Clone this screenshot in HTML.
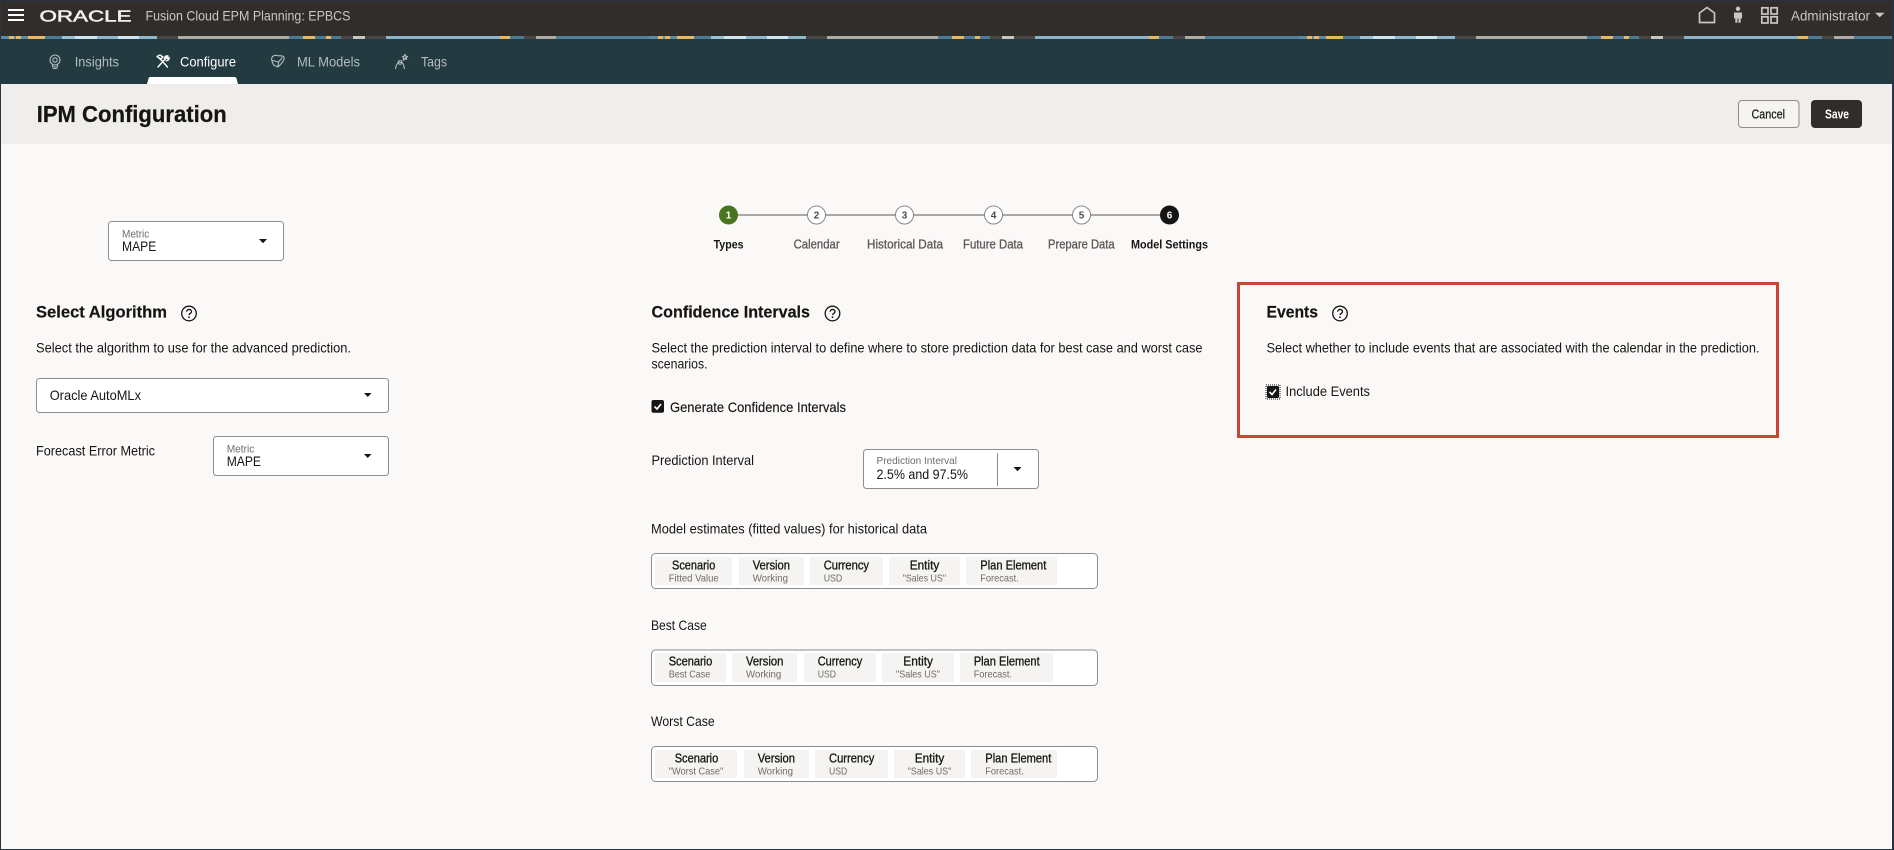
<!DOCTYPE html>
<html lang="en"><head><meta charset="utf-8"><title>IPM Configuration</title>
<style>
html,body{margin:0;padding:0;width:1894px;height:850px;overflow:hidden;background:#fbf9f8}
svg{display:block;font-family:"Liberation Sans",Arial,sans-serif}
text{fill:#161513;font-size:14px}
.b{font-weight:700}
.hd{font-size:17px;font-weight:700;stroke:#161513;stroke-width:.2}
.st{font-size:12.5px;fill:#161513;stroke:#161513;stroke-width:.3}
.ss{font-size:10.5px;fill:#6f6c69}
.lb{font-size:11px;fill:#6f6c69}
.sl{font-size:12.5px;fill:#5b5957;stroke:#5b5957;stroke-width:.3}
.sa{font-size:12px;font-weight:700;fill:#161513}
.d{font-size:10px;font-weight:700;text-anchor:middle;fill:#4f4c4a}
.h{font-size:14px;fill:#c9c6c3}
.tb{font-size:14px;fill:#b3bcbf}
.box{fill:#fff;stroke:#8f8c89;stroke-width:1}
.chipbox{fill:#fff;stroke:#8f8c89;stroke-width:1}
.chip{fill:#f5f4f2}
.car{fill:#161513}
.ic{fill:none;stroke:#b3bcbf;stroke-width:1.1;stroke-linecap:round;stroke-linejoin:round}
.hi{fill:none;stroke:#c9c6c3;stroke-width:1.7}
</style></head><body>
<div style="position:absolute;left:0;top:36px;width:1894px;height:3px;background-image:linear-gradient(90deg,#5d8ba5 0 9px,#e8b860 9px 14px,#5d8ba5 14px 16px,#e8b860 16px 21px,#5d8ba5 21px 28px,#e8b860 28px 45px,#4a7a94 45px 62px,#9cc3d5 62px 75px,#cfe6f0 75px 97px,#8db8cc 97px 118px,#cfe6f0 118px 139px,#8db8cc 139px 157px,#4b4644 157px 178px,#b0aaa5 178px 289px,#4a7a94 289px 303px,#e8b860 303px 315px,#4a7a94 315px 326px,#e8b860 326px 331px,#4a7a94 331px 341px,#4b4644 341px 353px,#c8c4c0 353px 365px,#4b4644 365px 386px,#8bb4c8 386px 500px,#e8b860 500px 510px,#4a7a94 510px 524px,#4b4644 524px 536px,#b0aaa5 536px 556px,#527f98 556px 649px);background-size:649px 3px;background-repeat:repeat-x"></div>
<svg style="position:absolute;left:0;top:0" width="1894" height="850" viewBox="0 0 1894 850" xmlns="http://www.w3.org/2000/svg">
<!-- top bar -->
<rect x="0" y="0" width="1894" height="36" fill="#312d2a"/>
<rect x="0" y="0" width="1894" height="1" fill="#2b3245"/>
<rect x="0" y="39" width="1894" height="45" fill="#243a41"/>
<rect x="0" y="84" width="1894" height="60" fill="#f0eeec"/>
<g fill="#fff"><rect x="8" y="9" width="16" height="2"/><rect x="8" y="14" width="16" height="2"/><rect x="8" y="19" width="16" height="2"/></g>
<text x="39.5" y="21.7" textLength="92" lengthAdjust="spacingAndGlyphs" style="font-size:15.4px;fill:#f2f0ee;stroke:#f2f0ee;stroke-width:.5">ORACLE</text>
<text class="h" x="145.5" y="20.7" textLength="205" lengthAdjust="spacingAndGlyphs">Fusion Cloud EPM Planning:  EPBCS</text>
<!-- header right icons -->
<path class="hi" d="M1699.5 22.5V13L1707 7.5L1714.5 13V22.5Z"/>
<g fill="#c9c6c3"><circle cx="1738" cy="8.8" r="2.2"/><path d="M1734 12.5h8v6h-1.3v4.2h-2.2v-4.2h-1v4.2h-2.2v-4.2H1734z"/></g>
<g class="hi"><rect x="1761.8" y="7.8" width="6.2" height="6.2"/><rect x="1771" y="7.8" width="6.2" height="6.2"/><rect x="1761.8" y="16.8" width="6.2" height="6.2"/><rect x="1771" y="16.8" width="6.2" height="6.2"/></g>
<text class="h" x="1791" y="20.5" textLength="79" lengthAdjust="spacingAndGlyphs">Administrator</text>
<path d="M1875 12.7h9.5l-4.75 4.5z" fill="#c9c6c3"/>
<!-- tabs -->
<g class="ic">
<circle cx="55" cy="60" r="5"/><circle cx="55" cy="60" r="2.2"/><path d="M52.5 65v2h5v-2M53.3 68.5h3.4"/>
<path style="stroke:#fff;stroke-width:1.4" d="M158 67l8-9M167.500 67l-8-9M157 56.500l3-1.500 3 2-2.500 2.500zM164.500 58.500c0-2 1.500-3 3.500-2.500l-1.500 1.800 1 1 1.600-1.300c.4 2-1 3.400-3 3.200"/>
<path d="M272 61c-1.500-3.500 1.500-6.500 5-5.500 3 .8 6-.6 7 2 .8 2.500-1.500 5-3.500 7l-2.500 2.500-3.500-1.500c-1.500-.8-2-2.500-2.500-4.500zM272.500 60.500l6 1.500 3.500-4M278.500 62l-.5 4"/>
<path d="M395.500 68.500c.5-3.500 2-5.500 4-6.500l3.500 1.500 1.500 5M400 60.500a1.900 1.900 0 1 0 .1 0M403 60.500l3-3M405 54.500l.8 1.700 1.800.3-1.300 1.200.3 1.800-1.600-.8-1.600.8.3-1.800-1.300-1.200 1.800-.3z"/>
</g>
<text class="tb" x="74.7" y="66.5" textLength="44.3" lengthAdjust="spacingAndGlyphs">Insights</text>
<text x="180" y="66.5" textLength="56" lengthAdjust="spacingAndGlyphs" style="fill:#fff">Configure</text>
<text class="tb" x="297" y="66.5" textLength="63" lengthAdjust="spacingAndGlyphs">ML Models</text>
<text class="tb" x="421" y="66.5" textLength="26" lengthAdjust="spacingAndGlyphs">Tags</text>
<path d="M147 84l1.500-5.500a2 2 0 0 1 2-1.500h84a2 2 0 0 1 2 1.500l1.500 5.500z" fill="#fff"/>
<!-- title bar -->
<text class="b" x="36.700" y="122" textLength="190" lengthAdjust="spacingAndGlyphs" style="font-size:23.500px;stroke:#161513;stroke-width:.25">IPM Configuration</text>
<rect x="1738.500" y="100.500" width="60.500" height="27" rx="3.500" fill="#f5f4f2" stroke="#8f8c89"/>
<text x="1751.500" y="118.300" textLength="33.500" lengthAdjust="spacingAndGlyphs" style="font-size:12.500px;stroke:#161513;stroke-width:.2">Cancel</text>
<rect x="1811" y="100" width="51" height="28" rx="4" fill="#312d2a"/>
<text class="b" x="1825" y="118.300" textLength="24" lengthAdjust="spacingAndGlyphs" style="font-size:12.500px;fill:#fff">Save</text>
<!-- stepper -->
<rect x="728" y="214" width="441" height="2" fill="#aaa7a4"/>
<circle cx="728.500" cy="215" r="9.500" fill="#4a7520"/>
<g fill="#fff" stroke="#8a8785"><circle cx="816.500" cy="215" r="9"/><circle cx="904.500" cy="215" r="9"/><circle cx="993.500" cy="215" r="9"/><circle cx="1081.500" cy="215" r="9"/></g>
<circle cx="1169.500" cy="215" r="9.500" fill="#161513"/>
<text class="d" x="728.500" y="218.500" style="fill:#fff">1</text><text class="d" x="816.500" y="218.500">2</text><text class="d" x="904.500" y="218.500">3</text><text class="d" x="993.500" y="218.500">4</text><text class="d" x="1081.500" y="218.500">5</text><text class="d" x="1169.500" y="218.500" style="fill:#fff">6</text>
<text class="sa" x="713.600" y="248.300" textLength="30" lengthAdjust="spacingAndGlyphs">Types</text>
<text class="sl" x="793.600" y="248.300" textLength="46" lengthAdjust="spacingAndGlyphs">Calendar</text>
<text class="sl" x="867" y="248.300" textLength="76" lengthAdjust="spacingAndGlyphs">Historical Data</text>
<text class="sl" x="963" y="248.300" textLength="60" lengthAdjust="spacingAndGlyphs">Future Data</text>
<text class="sl" x="1048" y="248.300" textLength="66.600" lengthAdjust="spacingAndGlyphs">Prepare Data</text>
<text class="sa" x="1131" y="248.300" textLength="77" lengthAdjust="spacingAndGlyphs">Model Settings</text>
<!-- left column -->
<rect class="box" x="108.500" y="221.500" width="175" height="39" rx="3"/>
<text class="lb" x="122" y="237.500" textLength="27.300" lengthAdjust="spacingAndGlyphs">Metric</text>
<text x="122" y="251" textLength="34.300" lengthAdjust="spacingAndGlyphs">MAPE</text>
<path class="car" d="M259 239h8l-4 4.200z"/>
<text class="hd" x="36" y="317.500" textLength="131" lengthAdjust="spacingAndGlyphs">Select Algorithm</text>
<g fill="none" stroke="#161513" stroke-width="1.300"><circle cx="189" cy="313.500" r="7.300"/><path d="M186.700 311.700c0-3 4.800-3 4.800-.1 0 1.700-2.400 1.700-2.400 3.500"/></g><circle cx="189" cy="317.300" r=".9" fill="#161513"/>
<text x="36" y="352.500" textLength="315" lengthAdjust="spacingAndGlyphs">Select the algorithm to use for the advanced prediction.</text>
<rect class="box" x="36.500" y="378.500" width="352" height="34" rx="3"/>
<text x="49.700" y="400" textLength="91.300" lengthAdjust="spacingAndGlyphs">Oracle AutoMLx</text>
<path class="car" d="M364 393h7.500l-3.750 4z"/>
<text x="36" y="455.700" textLength="119" lengthAdjust="spacingAndGlyphs">Forecast Error Metric</text>
<rect class="box" x="213.500" y="436.500" width="175" height="39" rx="3"/>
<text class="lb" x="226.700" y="452.500" textLength="27.600" lengthAdjust="spacingAndGlyphs">Metric</text>
<text x="226.700" y="466" textLength="34.300" lengthAdjust="spacingAndGlyphs">MAPE</text>
<path class="car" d="M364 454h7.500l-3.750 4z"/>
<!-- middle column -->
<text class="hd" x="651.500" y="317.500" textLength="158.500" lengthAdjust="spacingAndGlyphs">Confidence Intervals</text>
<g fill="none" stroke="#161513" stroke-width="1.300"><circle cx="832.500" cy="313.500" r="7.300"/><path d="M830.200 311.700c0-3 4.800-3 4.800-.1 0 1.700-2.400 1.700-2.400 3.500"/></g><circle cx="832.500" cy="317.300" r=".9" fill="#161513"/>
<text x="651.500" y="352.300" textLength="551" lengthAdjust="spacingAndGlyphs">Select the prediction interval to define where to store prediction data for best case and worst case</text>
<text x="651.500" y="368.300" textLength="56" lengthAdjust="spacingAndGlyphs">scenarios.</text>
<rect x="651.500" y="400" width="12.500" height="12.800" rx="2" fill="#161513"/>
<path d="M654.500 406.500l2.500 2.500 4-5" fill="none" stroke="#fff" stroke-width="1.600"/>
<text x="670" y="412" textLength="176" lengthAdjust="spacingAndGlyphs" style="stroke:#161513;stroke-width:.15">Generate Confidence Intervals</text>
<text x="651.500" y="465" textLength="102.500" lengthAdjust="spacingAndGlyphs">Prediction Interval</text>
<rect class="box" x="863.500" y="449.500" width="175" height="39" rx="3"/>
<text class="ss" x="876.500" y="464" textLength="80.500" lengthAdjust="spacingAndGlyphs">Prediction Interval</text>
<text x="876.500" y="479" textLength="91.500" lengthAdjust="spacingAndGlyphs">2.5% and 97.5%</text>
<rect x="997" y="453" width="1" height="33" fill="#8f8c89"/>
<path class="car" d="M1013.500 467h8l-4 4.200z"/>
<text x="651" y="533.300" textLength="276" lengthAdjust="spacingAndGlyphs">Model estimates (fitted values) for historical data</text>
<rect class="chipbox" x="651.500" y="553.500" width="446" height="35" rx="4"/>
<g class="chip"><rect x="655" y="557" width="77" height="28"/><rect x="739" y="557" width="65" height="28"/><rect x="810" y="557" width="73" height="28"/><rect x="889" y="557" width="71" height="28"/><rect x="966" y="557" width="91" height="28"/></g>
<text class="st" x="672" y="569.300" textLength="43.300" lengthAdjust="spacingAndGlyphs">Scenario</text>
<text class="ss" x="668.700" y="581.300" textLength="50" lengthAdjust="spacingAndGlyphs">Fitted Value</text>
<text class="st" x="752.700" y="569.300" textLength="37.300" lengthAdjust="spacingAndGlyphs">Version</text>
<text class="ss" x="752.700" y="581.300" textLength="35.300" lengthAdjust="spacingAndGlyphs">Working</text>
<text class="st" x="823.700" y="569.300" textLength="45.300" lengthAdjust="spacingAndGlyphs">Currency</text>
<text class="ss" x="823.700" y="581.300" textLength="18.600" lengthAdjust="spacingAndGlyphs">USD</text>
<text class="st" x="909.700" y="569.300" textLength="29.600" lengthAdjust="spacingAndGlyphs">Entity</text>
<text class="ss" x="902.700" y="581.300" textLength="43.300" lengthAdjust="spacingAndGlyphs">"Sales US"</text>
<text class="st" x="980.300" y="569.300" textLength="66" lengthAdjust="spacingAndGlyphs">Plan Element</text>
<text class="ss" x="980.300" y="581.300" textLength="38.400" lengthAdjust="spacingAndGlyphs">Forecast.</text>
<text x="651" y="630" textLength="55.700" lengthAdjust="spacingAndGlyphs">Best Case</text>
<rect class="chipbox" x="651.500" y="650" width="446" height="35.500" rx="4"/>
<g class="chip"><rect x="655" y="653" width="71" height="29"/><rect x="732" y="653" width="65" height="29"/><rect x="804" y="653" width="72" height="29"/><rect x="882" y="653" width="72" height="29"/><rect x="960" y="653" width="93" height="29"/></g>
<text class="st" x="668.700" y="665.300" textLength="43.600" lengthAdjust="spacingAndGlyphs">Scenario</text>
<text class="ss" x="668.700" y="677.300" textLength="41.600" lengthAdjust="spacingAndGlyphs">Best Case</text>
<text class="st" x="746" y="665.300" textLength="37.300" lengthAdjust="spacingAndGlyphs">Version</text>
<text class="ss" x="746" y="677.300" textLength="35.300" lengthAdjust="spacingAndGlyphs">Working</text>
<text class="st" x="817.700" y="665.300" textLength="44.600" lengthAdjust="spacingAndGlyphs">Currency</text>
<text class="ss" x="817.700" y="677.300" textLength="18.300" lengthAdjust="spacingAndGlyphs">USD</text>
<text class="st" x="903.300" y="665.300" textLength="29.700" lengthAdjust="spacingAndGlyphs">Entity</text>
<text class="ss" x="896" y="677.300" textLength="44" lengthAdjust="spacingAndGlyphs">"Sales US"</text>
<text class="st" x="973.700" y="665.300" textLength="66" lengthAdjust="spacingAndGlyphs">Plan Element</text>
<text class="ss" x="973.700" y="677.300" textLength="38.300" lengthAdjust="spacingAndGlyphs">Forecast.</text>
<text x="651" y="726" textLength="63.700" lengthAdjust="spacingAndGlyphs">Worst Case</text>
<rect class="chipbox" x="651.500" y="746.500" width="446" height="35" rx="4"/>
<g class="chip"><rect x="655" y="750" width="82" height="28"/><rect x="744" y="750" width="65" height="28"/><rect x="815" y="750" width="73" height="28"/><rect x="894" y="750" width="71" height="28"/><rect x="971" y="750" width="86" height="28"/></g>
<text class="st" x="674.700" y="762.300" textLength="43.600" lengthAdjust="spacingAndGlyphs">Scenario</text>
<text class="ss" x="668.700" y="774.300" textLength="54.600" lengthAdjust="spacingAndGlyphs">"Worst Case"</text>
<text class="st" x="757.700" y="762.300" textLength="37.300" lengthAdjust="spacingAndGlyphs">Version</text>
<text class="ss" x="757.700" y="774.300" textLength="35.300" lengthAdjust="spacingAndGlyphs">Working</text>
<text class="st" x="829" y="762.300" textLength="45.300" lengthAdjust="spacingAndGlyphs">Currency</text>
<text class="ss" x="829" y="774.300" textLength="18.300" lengthAdjust="spacingAndGlyphs">USD</text>
<text class="st" x="914.700" y="762.300" textLength="29.600" lengthAdjust="spacingAndGlyphs">Entity</text>
<text class="ss" x="907.700" y="774.300" textLength="43.600" lengthAdjust="spacingAndGlyphs">"Sales US"</text>
<text class="st" x="985.300" y="762.300" textLength="66" lengthAdjust="spacingAndGlyphs">Plan Element</text>
<text class="ss" x="985.300" y="774.300" textLength="38.400" lengthAdjust="spacingAndGlyphs">Forecast.</text>
<!-- events -->
<rect x="1238.500" y="283.500" width="539" height="153" fill="none" stroke="#c74634" stroke-width="3"/>
<text class="hd" x="1266.500" y="317.500" textLength="51.500" lengthAdjust="spacingAndGlyphs">Events</text>
<g fill="none" stroke="#161513" stroke-width="1.300"><circle cx="1340" cy="313.500" r="7.300"/><path d="M1337.700 311.700c0-3 4.800-3 4.800-.1 0 1.700-2.400 1.700-2.400 3.500"/></g><circle cx="1340" cy="317.300" r=".9" fill="#161513"/>
<text x="1266.500" y="352.300" textLength="493" lengthAdjust="spacingAndGlyphs">Select whether to include events that are associated with the calendar in the prediction.</text>
<rect x="1267" y="386" width="12" height="12" rx="1.500" fill="#161513"/>
<rect x="1266" y="385" width="14" height="14" fill="none" stroke="#161513" stroke-width="1" stroke-dasharray="1 1"/>
<path d="M1269.500 392l2.500 2.500 4-5" fill="none" stroke="#fff" stroke-width="1.600"/>
<text x="1285.500" y="396" textLength="84.500" lengthAdjust="spacingAndGlyphs">Include Events</text>
<!-- page frame -->
<rect x="0" y="0" width="1" height="850" fill="#2b3245"/>
<rect x="1892" y="0" width="2" height="850" fill="#2b3245"/>
<rect x="0" y="849" width="1894" height="1" fill="#2b3245"/>
</svg>
</body></html>
